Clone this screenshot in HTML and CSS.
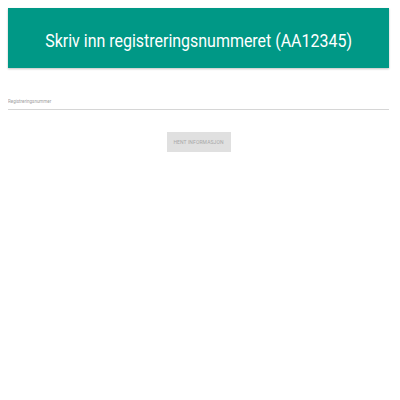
FILE: index.html
```html
<!DOCTYPE html>
<html>
<head>
<meta charset="utf-8">
<link rel="stylesheet" href="styles.css">
</head>
<body>
<header class="banner">
  <h1 class="title">Skriv inn registreringsnummeret (AA12345)</h1>
</header>
<div class="field">
  <input class="input" type="text" placeholder="Registreringsnummer">
</div>
<div class="actions">
  <button class="btn" disabled>HENT INFORMASJON</button>
</div>
</body>
</html>
```
FILE: styles.css
```css
html, body {
  margin: 0;
  padding: 0;
  background: #ffffff;
}
body {
  padding: 8px 11px 8px 8px;
  font-family: Roboto, "Open Sans", sans-serif;
}
.banner {
  background: #009886;
  height: 60px;
  display: flex;
  align-items: center;
  justify-content: center;
  box-shadow: 0 1px 2px rgba(0,0,0,0.25);
}
.title {
  margin: 5px 0 0 0;
  color: #ffffff;
  font-family: Roboto, sans-serif;
  font-weight: 400;
  font-size: 19px;
  white-space: nowrap;
  transform: scaleX(0.84);
}
.field {
  margin-top: 31px;
}
.input {
  display: block;
  width: 100%;
  box-sizing: border-box;
  border: none;
  border-bottom: 1px solid #d6d6d6;
  padding: 0 0 5px 0;
  font-family: Roboto, sans-serif;
  font-size: 4.5px;
  color: #999;
  outline: none;
  background: transparent;
}
.input::placeholder {
  color: #a0a0a0;
}
.actions {
  display: flex;
  justify-content: center;
  margin-top: 22px;
}
.btn {
  width: 64px;
  height: 20px;
  border: none;
  background: #e0e0e0;
  color: #a8a8a8;
  font-family: Roboto, sans-serif;
  font-size: 5px;
  padding: 0;
  letter-spacing: 0.1px;
}
```
